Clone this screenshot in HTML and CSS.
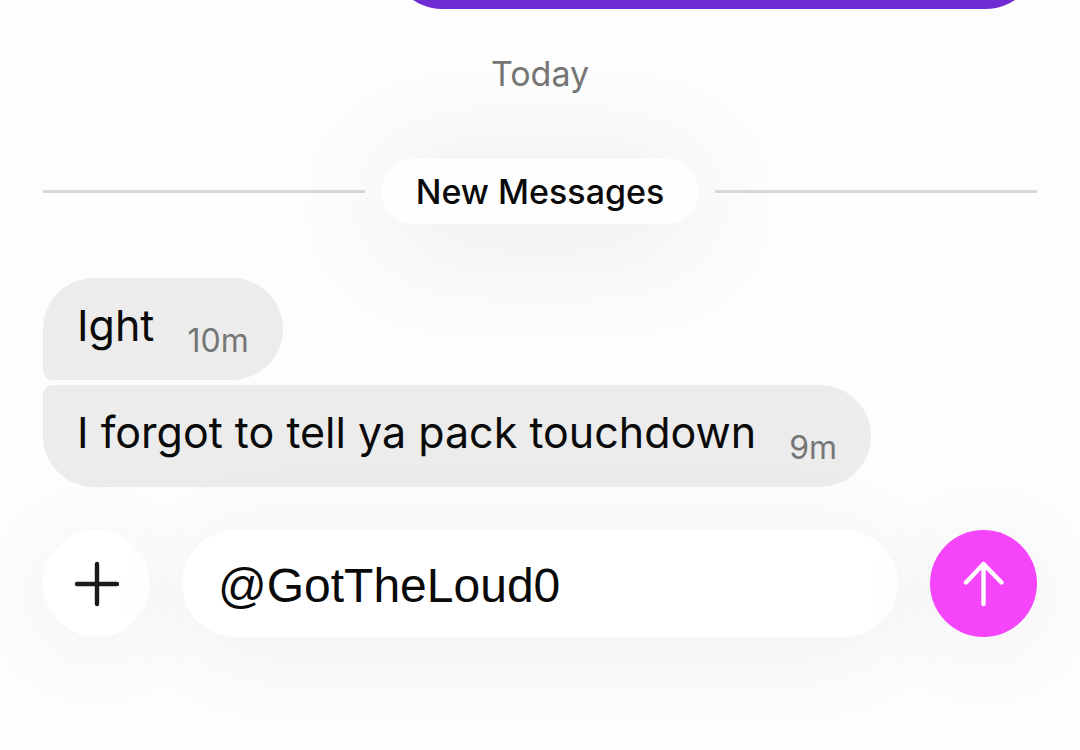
FILE: index.html
```html
<!DOCTYPE html>
<html lang="en">
<head>
  <meta charset="UTF-8">
  <meta name="viewport" content="width=device-width, initial-scale=1.0">
  <title>Chat</title>
  <link rel="stylesheet" href="styles.css">
</head>
<body>
  <main class="messages">
    <div class="bubble outgoing"></div>

    <p class="day">Today</p>

    <div class="divider">
      <span class="divider-label">New Messages</span>
    </div>

    <div class="group">
      <div class="bubble incoming first">
        <span class="text">Ight</span>
        <time class="time">10m</time>
      </div>
      <div class="bubble incoming last">
        <span class="text">I forgot to tell ya pack touchdown</span>
        <time class="time">9m</time>
      </div>
    </div>
  </main>

  <form class="composer">
    <button type="button" class="round-button add" aria-label="Add attachment">
      <svg width="46" height="46" viewBox="0 0 46 46" fill="none" stroke="currentColor" stroke-width="4.4" stroke-linecap="round">
        <path d="M23 3v40M3 23h40"/>
      </svg>
    </button>
    <input class="message-input" type="text" value="@GotTheLoud0" aria-label="Message">
    <button type="submit" class="round-button send" aria-label="Send">
      <svg width="46" height="46" viewBox="0 0 46 46" fill="none" stroke="currentColor" stroke-width="4.4" stroke-linecap="round" stroke-linejoin="round">
        <path d="M22.500 43V3M5 21.500L22.500 3l18 18.500"/>
      </svg>
    </button>
  </form>
</body>
</html>
```

FILE: styles.css
```css
* { box-sizing: border-box; }

body {
  margin: 0;
  height: 100vh;
  display: flex;
  flex-direction: column;
  overflow: hidden;
  background: #fdfdfd;
  color: #0a0a0a;
  font-family: Inter, "Liberation Sans", sans-serif;
}

/* conversation, anchored to the bottom */
.messages {
  flex: 1;
  min-height: 0;
  display: flex;
  flex-direction: column;
  justify-content: flex-end;
  padding: 0 43px;
}

.bubble {
  flex: none;
  min-height: 102px;
  border-radius: 51px;
}

.outgoing {
  align-self: flex-end;
  width: 65%;
  background: #702cd3;
}

.day {
  margin: 44px 0 64px;
  color: #767676;
  font-size: 34px;
  line-height: 42px;
  text-align: center;
}

.divider {
  display: flex;
  align-items: center;
  gap: 16px;
  margin-bottom: 54px;
}
.divider::before,
.divider::after {
  content: "";
  flex: 1;
  height: 3px;
  background: #d8d8d8;
}
.divider-label {
  padding: 12px 35px;
  border-radius: 33px;
  background: #fefefe;
  box-shadow: 0 12px 120px rgba(0, 0, 0, 0.1);
  font-size: 34px;
  font-weight: 500;
  line-height: 41px;
}

.group {
  display: flex;
  flex-direction: column;
  align-items: flex-start;
  gap: 5px;
}
.incoming {
  display: flex;
  align-items: flex-end;
  gap: 33px;
  padding: 20px 34px;
  background: #ececec;
}
.first { border-bottom-left-radius: 9px; }
.last { border-top-left-radius: 9px; }

.text {
  align-self: flex-start;
  font-size: 43px;
  line-height: 54px;
}
.time {
  color: #767676;
  font-size: 32px;
  line-height: 38px;
}

/* message box */
.composer {
  display: flex;
  gap: 32px;
  padding: 43px 43px 113px;
}
.round-button {
  flex: none;
  display: flex;
  align-items: center;
  justify-content: center;
  width: 107px;
  height: 107px;
  padding: 0;
  border: none;
  border-radius: 50%;
  cursor: pointer;
}
.add,
.message-input {
  background: #fff;
  box-shadow: 0 12px 100px rgba(0, 0, 0, 0.06);
}
.add { color: #1a1a1a; }
.send {
  background: #f545fa;
  box-shadow: 0 12px 100px rgba(0, 0, 0, 0.06);
  color: #fff;
}
.message-input {
  flex: 1;
  min-width: 0;
  height: 107px;
  padding: 4px 36px 0;
  border: none;
  border-radius: 54px;
  outline: none;
  color: #0a0a0a;
  font-family: "Liberation Sans", Arial, sans-serif;
  font-size: 48px;
}
```
